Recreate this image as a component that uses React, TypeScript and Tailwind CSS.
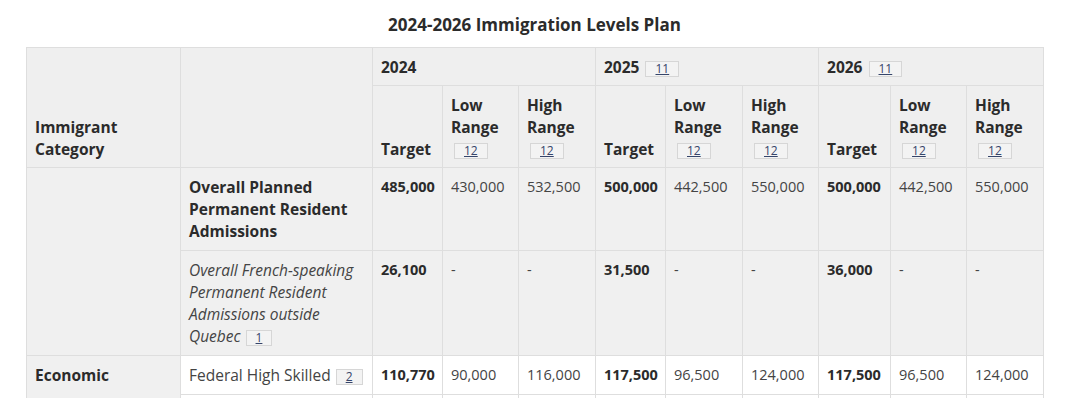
const widths = [154, 192, 70, 76, 77, 70, 77, 76, 72, 76, 77];

type Vals = [string, string, string];

const rows: { label: string; italic?: boolean; bold?: boolean; note?: string; years: Vals[] }[] = [
  {
    label: "Overall Planned Permanent Resident Admissions",
    bold: true,
    years: [
      ["485,000", "430,000", "532,500"],
      ["500,000", "442,500", "550,000"],
      ["500,000", "442,500", "550,000"],
    ],
  },
  {
    label: "Overall French-speaking Permanent Resident Admissions outside Quebec",
    italic: true,
    note: "1",
    years: [
      ["26,100", "-", "-"],
      ["31,500", "-", "-"],
      ["36,000", "-", "-"],
    ],
  },
];

function Ref({ n, className = "" }: { n: string; className?: string }) {
  return (
    <span className={`inline-block border border-[#d6d6d6] bg-[#f3f3f3] px-[9px] align-baseline text-[12px] font-normal not-italic leading-[14px] text-[#36456a] underline ${className}`}>
      {n}
    </span>
  );
}

const cell = "border border-[#dedede] px-2 py-2 align-top";
const num = `${cell} text-[14.5px]`;
const head = "border border-[#dedede] bg-[#efefef] px-2 pt-2 pb-[7px] text-left align-bottom font-bold text-[#2b2b2b]";

export default function App() {
  return (
    <div className="h-[398px] overflow-hidden bg-white pl-[26px] font-['Open_Sans',sans-serif] text-[15.5px] leading-[22px] text-[#444]">
      <div className="w-[1017px] pt-[14px] pb-[11px] text-center text-[17px] font-bold leading-[22px] text-[#2b2b2b]">
        2024-2026 Immigration Levels Plan
      </div>
      <table className="w-[1017px] table-fixed border-collapse">
        <colgroup>
          {widths.map((w, i) => (
            <col key={i} style={{ width: w }} />
          ))}
        </colgroup>
        <thead>
          <tr>
            <th className={head} rowSpan={2}>Immigrant Category</th>
            <th className={head} rowSpan={2}></th>
            <th className={`${head} align-middle`} colSpan={3}>2024</th>
            <th className={`${head} align-middle`} colSpan={3}>
              2025 <Ref n="11" className="ml-[2px]" />
            </th>
            <th className={`${head} align-middle`} colSpan={3}>
              2026 <Ref n="11" className="ml-[2px]" />
            </th>
          </tr>
          <tr>
            {[0, 1, 2].map((y) => (
              <>
                <th key={`t${y}`} className={head}>Target</th>
                <th key={`l${y}`} className={head}>
                  Low Range <Ref n="12" className="ml-[3px]" />
                </th>
                <th key={`h${y}`} className={head}>
                  High Range <Ref n="12" className="ml-[3px]" />
                </th>
              </>
            ))}
          </tr>
        </thead>
        <tbody>
          {rows.map((r, i) => (
            <tr key={r.label} className="bg-[#f0f0f0]">
              {i === 0 && <td className={cell} rowSpan={2}></td>}
              <td className={`${cell} ${r.bold ? "font-bold text-[#2b2b2b]" : ""} ${r.italic ? "italic" : ""}`}>
                {r.label}
                {r.note && <Ref n={r.note} className="ml-[5px]" />}
              </td>
              {r.years.map((v, y) => (
                <>
                  <td key={`a${y}`} className={`${num} font-bold text-[#2b2b2b]`}>{v[0]}</td>
                  <td key={`b${y}`} className={num}>{v[1]}</td>
                  <td key={`c${y}`} className={num}>{v[2]}</td>
                </>
              ))}
            </tr>
          ))}
          <tr className="bg-white">
            <th className={`${cell} bg-[#f0f0f0] text-left font-bold text-[#2b2b2b]`} rowSpan={2}>Economic</th>
            <td className={cell}>
              Federal High Skilled <Ref n="2" className="ml-[1px]" />
            </td>
            {[
              ["110,770", "90,000", "116,000"],
              ["117,500", "96,500", "124,000"],
              ["117,500", "96,500", "124,000"],
            ].map((v, y) => (
              <>
                <td key={`a${y}`} className={`${num} font-bold text-[#2b2b2b]`}>{v[0]}</td>
                <td key={`b${y}`} className={num}>{v[1]}</td>
                <td key={`c${y}`} className={num}>{v[2]}</td>
              </>
            ))}
          </tr>
          <tr className="bg-white">
            {Array.from({ length: 10 }).map((_, k) => (
              <td key={k} className={`${cell} h-[38px]`}></td>
            ))}
          </tr>
        </tbody>
      </table>
    </div>
  );
}
